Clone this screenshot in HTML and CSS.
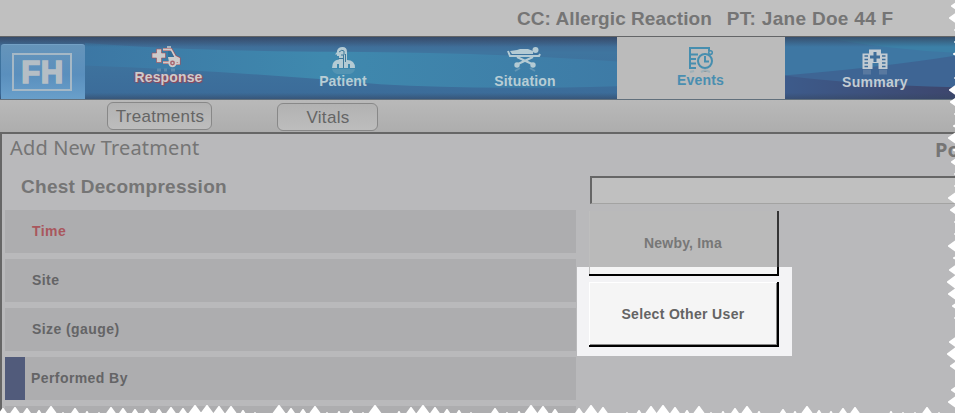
FILE: index.html
```html
<!DOCTYPE html>
<html lang="en">
<head>
<meta charset="utf-8">
<title>Add New Treatment</title>
<link rel="stylesheet" href="styles.css">
</head>
<body>
<div class="app">
  <header class="banner"><span>CC: Allergic Reaction</span><span class="person">PT: Jane Doe 44 F</span></header>
  <nav class="nav">
    <svg class="waves" viewBox="0 0 955 63" preserveAspectRatio="none">
      <defs>
        <linearGradient id="base" x1="0" y1="0" x2="0" y2="1"><stop offset="0" stop-color="#3f6490"/><stop offset=".25" stop-color="#3f759f"/><stop offset="1" stop-color="#3b6b99"/></linearGradient>
        <linearGradient id="glow" x1="0" y1="0" x2="1" y2="0"><stop offset="0" stop-color="#3c77a4"/><stop offset=".45" stop-color="#3f89ae"/><stop offset="1" stop-color="#3e7ba6"/></linearGradient>
        <linearGradient id="indigo" x1="0" y1="0" x2="1" y2="0"><stop offset="0" stop-color="#3d5b8b"/><stop offset="1" stop-color="#3d466d"/></linearGradient>
        <linearGradient id="shade" x1="0" y1="0" x2="0" y2="1"><stop offset="0" stop-color="#354661" stop-opacity=".8"/><stop offset=".16" stop-color="#354661" stop-opacity="0"/><stop offset=".9" stop-color="#354661" stop-opacity="0"/><stop offset="1" stop-color="#354661" stop-opacity=".55"/></linearGradient>
      </defs>
      <rect width="955" height="63" fill="url(#base)"/>
      <path d="M85 6 Q180 14 340 15 T617 25 V50 Q480 54 380 48 Q240 35 85 29Z" fill="url(#glow)"/>
      <rect x="784" width="171" height="63" fill="#3e77a3"/>
      <path d="M820 0 Q890 13 955 16 V0Z" fill="#3c80a7"/>
      <path d="M784 39 Q880 31 955 19 V63 H784Z" fill="#3e6594"/>
      <path d="M784 39 Q850 48 955 51 V63 H784Z" fill="url(#indigo)"/>
      <rect width="955" height="63" fill="url(#shade)"/>
    </svg>
    <div class="logo"><span class="frame">FH</span></div>
    <a class="tab response">
      <svg class="icon" width="30" height="26" viewBox="0 0 30 26"><g fill="#ccc" stroke="#ad4b50" stroke-width=".6"><path d="M5.500 3h5v4h4v5h-4v4.500h-5v-4.500H1v-5h4.500z"/></g><path d="M12 3.500h8l4 7 4 2v5h-3M12 16.500h6" fill="none" stroke="#ad4b50" stroke-width="3"/><path d="M12 3.500h8l4 7 4 2v5h-3M12 16.500h6" fill="none" stroke="#ccc" stroke-width="1.800"/><path d="M17 5h3l3 6h-6z" fill="#357099"/><path d="M16 1h4" stroke="#ccc" stroke-width="1.500"/><path d="M17 11h7l4 2v3h-10z" fill="#ccc"/><circle cx="21.500" cy="17" r="3.300" fill="#a9656f" stroke="#ccc" stroke-width="1.700"/><circle cx="21.500" cy="17" r="1" fill="#ccc"/><path d="M6 24h4M13 24h3M20 24h4" stroke="#8caec1" opacity=".4" stroke-width="3"/></svg>
      <span>Response</span>
    </a>
    <a class="tab patient">
      <svg class="icon" width="26" height="28" viewBox="0 0 26 28"><path d="M7 5Q8 1 12.500 1Q17 1 17 6V14Q25 14 25 22h-5v-4h-2v4H9v-4H7v4H2Q2 14 9 13.500V10H7V8.500H5L7 6z" fill="#b4cbd4"/><path d="M9 6q3-3 5-1v4h-3M8 12.500h5M13.500 9v13M15.500 8v8" fill="none" stroke="#3f7899" stroke-width="1"/><path d="M2 23h23q-1 4-5 5H7q-4-1-5-5" fill="#b4cbd4" opacity=".18"/></svg>
      <span>Patient</span>
    </a>
    <a class="tab situation">
      <svg class="icon" width="36" height="28" viewBox="0 0 36 28"><g fill="none" stroke="#b4cbd4" stroke-width="2"><path d="M2 5l2 5h29l1-2M11 11l15 7M27 11l-15 7" /></g><path d="M4 5l7-1 3-1h8l5 2v3H6z" fill="#b4cbd4"/><circle cx="29.500" cy="4" r="3" fill="#b4cbd4"/><circle cx="11" cy="19" r="2.700" fill="#b4cbd4"/><circle cx="27" cy="19" r="2.700" fill="#b4cbd4"/><path d="M9 25l5-3M29 25l-5-3" stroke="#b4cbd4" opacity=".3" stroke-width="2"/></svg>
      <span>Situation</span>
    </a>
    <a class="tab events active">
      <svg class="icon" width="28" height="28" viewBox="0 0 28 28"><g fill="none" stroke="#468eaf" stroke-width="2"><path d="M22 5V2H3v20h6M4 8.500h7M4 13h5M4 17.500h5"/><circle cx="18" cy="15" r="7"/><path d="M18 10v5.500h4"/><circle cx="23.500" cy="6.500" r="1.800" stroke-width="1.500"/></g><path d="M3 26l4-1M14 26l4-2 5 2" stroke="#468eaf" opacity=".25" stroke-width="2"/></svg>
      <span>Events</span>
    </a>
    <a class="tab summary">
      <svg class="icon" width="26" height="28" viewBox="0 0 26 28"><path d="M.500 5.500H7V1.500h12v4h6.500V21h-9v-6h-6v6H.500z" fill="#c3ccd3"/><path d="M11.500 4h3v3.500H18v3h-3.500V14h-3v-3.500H8v-3h3.500z" fill="#3e6d99"/><path d="M2.500 8h3.500M2.500 11.500h3.500M2.500 15h3.500M2.500 18.500h3.500M20 8h3.500M20 11.500h3.500M20 15h3.500M20 18.500h3.500" stroke="#3e6d99" stroke-width="1.500"/><path d="M1 24h8M17 24h8" stroke="#c3ccd3" stroke-width="5" opacity=".2"/></svg>
      <span>Summary</span>
    </a>
  </nav>
  <div class="subnav"><button class="pill treatments">Treatments</button><button class="pill vitals">Vitals</button></div>
  <main class="panel">
    <div class="titlebar"><h1>Add New Treatment</h1><span class="power">Po</span></div>
    <div class="columns">
      <section class="form">
        <h2>Chest Decompression</h2>
        <div class="row required">Time</div>
        <div class="row">Site</div>
        <div class="row">Size (gauge)</div>
        <div class="row current">Performed By</div>
        <div class="row"></div>
      </section>
      <section class="picker">
        <div class="search"></div>
        <div class="highlight"></div>
        <button class="user first"><span>Newby, Ima</span></button>
        <button class="user other"><span>Select Other User</span></button>
      </section>
    </div>
  </main>
</div>
<svg class="torn" width="955" height="413" viewBox="0 0 955 413"><path id="edge" fill="#fff"/></svg>
<script src="edge.js"></script>
</body>
</html>
```

FILE: styles.css
```css
* { box-sizing: border-box; }
body { margin: 0; width: 955px; height: 413px; overflow: hidden; position: relative; font-family: "Liberation Sans", Arial, sans-serif; background: #b9b9bb; }
.app { width: 955px; height: 413px; overflow: hidden; display: flex; flex-direction: column; }
.banner { height: 37px; flex: none; background: #c0c0c0; border-bottom: 1px solid #636567; display: flex; gap: 15px; padding-left: 517px; font-size: 19px; font-weight: bold; line-height: 37px; color: #757575; white-space: nowrap; letter-spacing: .06px; }
.person { letter-spacing: .3px; }
.nav { height: 63px; flex: none; position: relative; display: flex; align-items: flex-end; border-bottom: 1px solid #62707c; background: #3e6e99; }
.waves { position: absolute; left: 0; top: 0; width: 955px; height: 62px; }
.logo { position: relative; width: 84px; height: 55px; margin-left: 1px; padding-right: 2px; border-radius: 3px 3px 0 0; background: linear-gradient(#6594ba, #5a8fbd 55%, #699fca); display: flex; align-items: center; justify-content: center; border-top: 1px solid #73a0c5; flex: none; }
.frame { width: 60px; height: 38px; border: 2px solid #a5b8c6; display: flex; align-items: center; justify-content: center; font-size: 31px; font-weight: bold; color: #b5bec5; -webkit-text-stroke: 1.6px #b5bec5; line-height: 1; letter-spacing: .5px; padding-left: 1px; }
.tab { position: relative; height: 62px; flex: none; display: flex; flex-direction: column; align-items: center; font-size: 14px; font-weight: bold; color: #b8cdd5; line-height: 16px; padding-top: 9px; }
.tab span { margin-top: -1px; letter-spacing: .15px; }
.icon { flex: none; display: block; }
.response { width: 167px; color: #ccc; text-shadow: 1px 1px 1px #a34252, -1px 0 1px #8d4b68; }
.response .icon { margin-left: -6px; }
.response span { margin-top: -3px; }
.patient { width: 182px; }
.situation { width: 183px; }
.situation .icon { margin-left: -3px; }
.situation span { margin-right: 1px; letter-spacing: .2px; }
.active { width: 168px; margin-right: -1px; padding-right: 1px; background: #bbb; color: #498eb0; }
.active span { margin-top: -2px; }
.summary { width: 171px; padding-left: 11px; padding-top: 11px; color: #c3ccd3; }
.summary span { margin-top: -2px; letter-spacing: .3px; }
.subnav { height: 32px; flex: none; display: flex; background: linear-gradient(#b9b9b9, #adadad); padding-left: 107px; }
.pill { font: 17px "Liberation Sans", Arial, sans-serif; color: #656565; border: 1px solid #888; border-radius: 6px; padding: 1px 0 0 1px; background: linear-gradient(#b2b2b2, #bdbdbd); height: 28px; letter-spacing: .32px; }
.treatments { width: 105px; margin-top: 2px; }
.vitals { width: 101px; margin: 3px 0 0 65px; }
.panel { height: 281px; flex: none; border-top: 2px solid #666; border-left: 2px solid #666; background: #b9b9bb; }
.titlebar { display: flex; height: 30px; justify-content: space-between; color: #757575; overflow: hidden; }
h1 { margin: 0 0 0 8px; font: 20px/28px "Noto Sans", sans-serif; letter-spacing: .15px; }
.power { width: 20px; font: bold 20px/32px "Noto Sans", sans-serif; }
.columns { display: flex; align-items: flex-start; }
.form { width: 574px; padding-left: 3px; flex: none; }
h2 { margin: 0; height: 46px; padding-left: 16px; font-size: 19px; line-height: 45px; color: #757575; letter-spacing: .28px; }
.row { height: 43px; margin-bottom: 6px; padding-left: 27px; background: #adadaf; color: #646466; font-size: 14px; line-height: 42px; font-weight: bold; letter-spacing: .42px; }
.required { color: #a9575d; }
.current { border-left: 20px solid #515b7b; padding-left: 6px; }
.picker { position: relative; flex: 1; padding: 12px 0 0 12px; }
.search { height: 28px; margin-left: 2px; background: #c0c0c0; border: 2px solid #666; border-right: 0; border-bottom: 1px solid #a3a3a2; }
.highlight { position: absolute; left: 1px; top: 103px; width: 215px; height: 89px; background: #f3f3f5; }
.user { position: relative; display: block; width: 190px; height: 65px; margin-left: 1px; padding: 0 3px 0 0; font: bold 14px "Liberation Sans", Arial, sans-serif; letter-spacing: .33px; border: 0; border-bottom: 2px solid #000; border-right: 2px solid #000; }
.first { margin-top: 7px; padding-right: 2px; letter-spacing: .2px; color: #777; background: linear-gradient(#bababa 56px, #f5f5f5 56px); border-right: 0; box-shadow: inset 1px 0 #bebebe; }
.first::after { content: ""; position: absolute; right: 0; top: 0; width: 2px; height: 65px; background: linear-gradient(#353535 56px, #000 56px); }
.other { margin-top: 6px; padding-right: 0; color: #646464; background: #f5f5f5; box-shadow: inset 1px 1px #fff, inset -1px -1px #888; }
.torn { position: absolute; left: 0; top: 0; pointer-events: none; }
```

FILE: edge.js
```js
// Tooth sizes along the torn bottom and right borders, one every 12px.
const bottom = [5,6,5,3,7,1,5,2,1,6,5,4,4,4,6,5,8,8,7,7,3,1,0,8,5,4,7,1,2,3,1,8,0,2,6,8,6,4,3,1,0,5,1,2,8,7,4,0,5,8,6,0,1,3,7,8,6,3,7,1,2,5,7,2,0,4,2,7,3,2,5,6,0,0,2,1,1,6,1,0];
const right = [4,6,1,1,2,0,1,6,5,1,2,7,2,4,1,1,7,5,1,1,7,2,6,8,7,3,1,0,6,8,5,0,4,7];
let d = "";
bottom.forEach((h, i) => {
  const x = 3 + i * 12;
  const w = h * 0.8;
  if (h) d += `M${x - w} 413L${x - 0.5} ${413 - h}H${x + 0.5}L${x + w} 413Z`;
});
right.forEach((h, i) => {
  const y = 6 + i * 12;
  const w = h * 0.8;
  if (h) d += `M955 ${y - w}L${955 - h} ${y - 0.5}V${y + 0.5}L955 ${y + w}Z`;
});
document.getElementById("edge").setAttribute("d", d);
```
